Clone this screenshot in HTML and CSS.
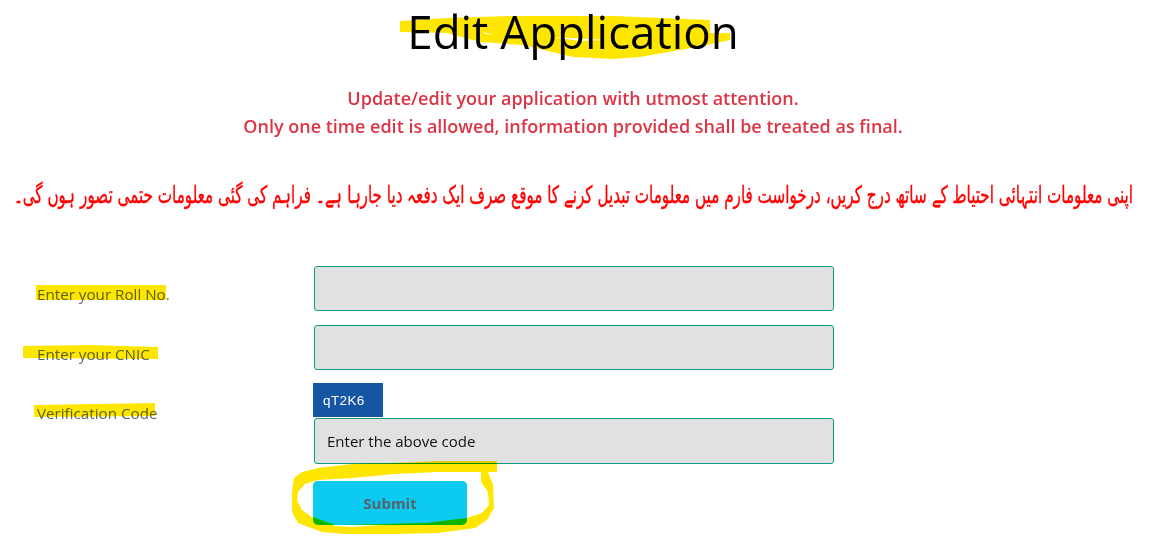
FILE: index.html
```html
<!DOCTYPE html>
<html lang="en">
<head>
    <meta charset="UTF-8">
    <meta name="viewport" content="width=device-width, initial-scale=1.0">
    <title>Edit Application</title>
    <link rel="stylesheet" href="styles.css">
</head>
<body>
    <div class="container">
        <h1>Edit Application</h1>

        <div class="notice">
            <p>Update/edit your application with utmost attention.</p>
            <p>Only one time edit is allowed, information provided shall be treated as final.</p>
        </div>

        <p class="urdu" lang="ur" dir="rtl"><span>اپنی معلومات انتہائی احتیاط کے ساتھ درج کریں، درخواست فارم میں معلومات تبدیل کرنے کا موقع صرف ایک دفعہ دیا جارہا ہے۔ فراہم کی گئی معلومات حتمی تصور ہوں گی۔</span></p>

        <form class="form">
            <label class="label label-first" for="roll">Enter your Roll No.</label>
            <input class="input" id="roll" type="text">

            <label class="label" for="cnic">Enter your CNIC</label>
            <input class="input" id="cnic" type="text">

            <label class="label" for="code">Verification Code</label>
            <div class="code-group">
                <div class="captcha">qT2K6</div>
                <input class="input" id="code" type="text" placeholder="Enter the above code">
            </div>

            <button class="submit" type="button"><span>Submit</span></button>
        </form>
    </div>

    <!-- marker scribbles drawn over the page -->
    <svg class="marks" width="1169" height="540" viewBox="0 0 1169 540" aria-hidden="true">
        <path fill-rule="evenodd" d="M400 21 447 18 513 16 613 16 710 20 710 33 730 33 730 40 697 47 640 57 613 59 573 57 523 45 480 42 447 33 400 32ZM483 32 493 35 485 34ZM553 37 607 40 580 41Z"/>
        <path d="M36 285 166 285 166 300 36 300Z"/>
        <path d="M23 346 90 345 158 347 158 359 23 358Z"/>
        <path d="M34 405 155 403 155 416 34 417Z"/>
        <path fill-rule="evenodd" d="M395 463 438 461 497 461 497 472 488 472 493 485 494 508 487 520 475 528 438 533 395 534 345 534 322 532 298 523 292 512 292 492 294 478 302 472 318 468 352 464ZM395 474 352 478 318 480 305 484 298 492 297 500 302 510 313 518 335 526 352 527 395 524 428 523 467 518 482 513 489 505 488 492 481 482 481 472 438 472Z"/>
    </svg>
</body>
</html>
```

FILE: styles.css
```css
* {
    margin: 0;
    padding: 0;
    box-sizing: border-box;
}

body {
    position: relative;
    height: 540px;
    overflow: hidden;
    background: #fff;
    font-family: "Open Sans", sans-serif;
}

.marks {
    position: absolute;
    top: 0;
    left: 0;
    fill: #ffe600;
    mix-blend-mode: multiply;
}

.container {
    width: 1146px;
}

h1 {
    font-size: 45.7px;
    font-weight: 400;
    line-height: 62px;
    text-align: center;
    color: #000;
}

.notice {
    margin-top: 22px;
    text-align: center;
    color: #dc3545;
    font-size: 18px;
    font-weight: 600;
    line-height: 28px;
}

.urdu {
    width: 1169px;
    margin-top: 27px;
    padding-right: 36px;
    height: 79px;
    font-family: "DejaVu Sans", sans-serif;
    font-size: 24px;
    line-height: 56px;
    color: #f00;
    white-space: nowrap;
    -webkit-text-stroke: 0.4px #f00;
}

.urdu span {
    display: inline-block;
    transform: scaleX(0.633);
    transform-origin: right center;
}

.form {
    display: grid;
    grid-template-columns: 277px 520px;
    row-gap: 14px;
    margin-top: 20px;
    padding-left: 37px;
}

.label {
    padding-top: 19px;
    font-size: 15.2px;
    line-height: 20px;
    color: #5c6b73;
}

.label-first {
    padding-top: 18px;
}

.input {
    display: block;
    width: 520px;
    height: 45px;
    padding: 0 12px;
    background: #e0e2e1;
    border: 1px solid #0f9a80;
    border-radius: 3px;
    font-family: inherit;
    font-size: 15px;
}

.input::placeholder {
    color: #111;
    opacity: 1;
}

.code-group {
    margin-top: -1px;
}

.captcha {
    width: 70px;
    height: 34px;
    margin-left: -1px;
    margin-bottom: 1px;
    padding-left: 10px;
    background: #1556a4;
    color: #fff;
    font-family: "Liberation Sans", sans-serif;
    font-size: 13.5px;
    line-height: 35px;
    letter-spacing: 0.4px;
}

.code-group .input {
    height: 46px;
}

.submit {
    grid-column: 2;
    position: relative;
    width: 154px;
    height: 44px;
    margin-top: 3px;
    margin-left: -1px;
    overflow: hidden;
    background: #0ac800;
    border: none;
    border-radius: 5px;
    color: #56626c;
    font-family: "Open Sans", sans-serif;
    font-size: 15px;
    font-weight: 700;
}

.submit::before {
    content: '';
    position: absolute;
    inset: 0;
    background: #0ccaf0;
    clip-path: polygon(0 0, 100% 0, 100% 37px, 75% 42px, 15% 44px, 0 36px);
}

.submit span {
    position: relative;
}
```
